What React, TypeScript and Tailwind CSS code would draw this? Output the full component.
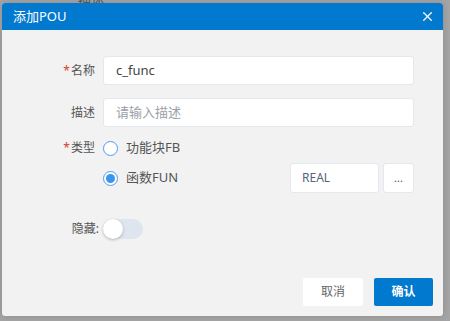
import { X } from 'lucide-react';

const FONT = "font-['Noto_Sans','Noto_Sans_CJK_SC',sans-serif]";

function Radio({ checked }: { checked?: boolean }) {
  return (
    <span className="flex h-[15px] w-[15px] items-center justify-center rounded-full border border-[#4b9cec] bg-white">
      {checked && <span className="h-[9px] w-[9px] rounded-full bg-[#3a95ef]" />}
    </span>
  );
}

export default function App() {
  return (
    <div className={`relative h-[321px] w-[450px] overflow-hidden bg-[#a4a4a4] pl-[2px] pt-[3px] ${FONT}`}>
      {/* page behind the overlay */}
      <span className="absolute left-[78px] top-[-9px] text-[13px] text-[#555]">描述</span>

      <div className="relative flex h-[313px] w-[441px] flex-col overflow-hidden rounded-[3px] bg-[#f2f2f2] shadow-[0_0_6px_rgba(0,0,0,0.15)]">
        {/* Header */}
        <div className="flex h-[27px] items-center justify-between bg-[#0179cf] pl-[11px] pr-[8px] text-white">
          <span className="text-[13px]">添加POU</span>
          <X size={15} strokeWidth={2} />
        </div>

        {/* Form */}
        <div className="flex flex-1 flex-col pr-[29px] pt-[26px] text-[12px] text-[#555]">
          <div className="flex h-[29px] items-center">
            <label className="w-[101px] pr-[8px] text-right">
              <span className="mr-[1px] text-[#d0442c]">*</span>名称
            </label>
            <div className="flex h-full flex-1 items-center rounded-[3px] border border-[#e3e7ee] bg-white pl-[12px] text-[13px] text-[#444]">
              c_func
            </div>
          </div>

          <div className="mt-[13px] flex h-[29px] items-center">
            <label className="w-[101px] pr-[8px] text-right">描述</label>
            <div className="flex h-full flex-1 items-center rounded-[3px] border border-[#e3e7ee] bg-white pl-[12px] text-[13px] text-[#9a9fa8]">
              请输入描述
            </div>
          </div>

          <div className="mt-[11px] flex">
            <label className="flex h-[20px] w-[101px] items-center justify-end pr-[8px]">
              <span className="mr-[1px] text-[#d0442c]">*</span>类型
            </label>
            <div className="flex flex-1 flex-col">
              <div className="flex h-[20px] items-center gap-[8px] text-[13px] text-[#555]">
                <Radio />
                <span>功能块FB</span>
              </div>
              <div className="mt-[5px] flex h-[30px] items-center">
                <div className="flex items-center gap-[8px] text-[13px] text-[#555]">
                  <Radio checked />
                  <span>函数FUN</span>
                </div>
                <div className="ml-auto flex h-full gap-[4px]">
                  <div className="flex h-full w-[89px] items-center rounded-[3px] border border-[#e3e7ee] bg-white pl-[11px] text-[12px] text-[#5a6475]">
                    REAL
                  </div>
                  <div className="flex h-full w-[31px] items-center justify-center rounded-[3px] border border-[#e3e7ee] bg-white text-[11px] text-[#555]">
                    ...
                  </div>
                </div>
              </div>
            </div>
          </div>

          <div className="mt-[25px] flex h-[21px] items-center">
            <label className="w-[101px] pr-[4px] text-right">隐藏:</label>
            <div className="relative h-[20px] w-[40px] rounded-full bg-[#dfe5ee]">
              <span className="absolute left-0 top-0 h-[20px] w-[20px] rounded-full bg-white shadow-[0_1px_3px_rgba(0,0,0,0.25)]" />
            </div>
          </div>
        </div>

        {/* Footer */}
        <div className="flex justify-end gap-[11px] pb-[10px] pr-[10px]">
          <button className="h-[28px] w-[60px] rounded-[2px] bg-white text-[12px] text-[#666]">取消</button>
          <button className="h-[28px] w-[59px] rounded-[2px] bg-[#0179cf] text-[12px] font-bold text-white">确认</button>
        </div>
      </div>
    </div>
  );
}
